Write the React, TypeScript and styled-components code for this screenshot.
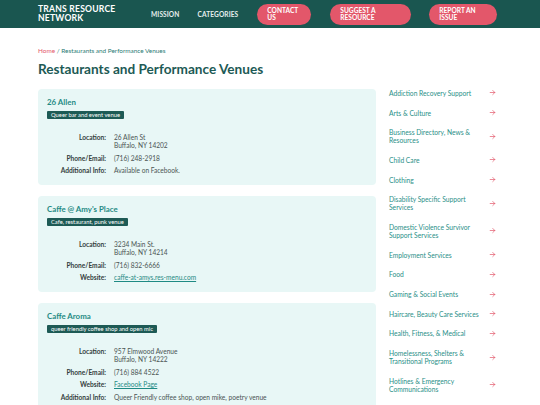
import React from "react";
import styled, { createGlobalStyle } from "styled-components";

const GlobalStyle = createGlobalStyle`
  html, body {
    margin: 0;
    padding: 0;
    background: #ffffff;
    font-family: Lato, "Open Sans", sans-serif;
  }
  * { box-sizing: border-box; }
`;

const Header = styled.header`
  height: 28px;
  background: #1a5650;
  display: flex;
  align-items: center;
  padding: 0 38px;
  & > * { flex-shrink: 0; }
`;

const Logo = styled.div`
  color: #ffffff;
  font-weight: 700;
  font-size: 8.6px;
  line-height: 9px;
  letter-spacing: 0.2px;
  width: 113px;
`;

const NavLink = styled.span<{ $gap: number }>`
  color: #e6efee;
  font-size: 6.6px;
  font-weight: 700;
  text-transform: uppercase;
  margin-right: ${({ $gap }) => $gap}px;
  letter-spacing: 0.1px;
`;

const PillButton = styled.span<{ $w: number; $gap: number }>`
  width: ${({ $w }) => $w}px;
  height: 21px;
  border-radius: 11px;
  background: #e3576a;
  color: #ffffff;
  font-size: 6.6px;
  font-weight: 700;
  line-height: 6.8px;
  text-transform: uppercase;
  display: flex;
  align-items: center;
  padding-left: 10px;
  margin-right: ${({ $gap }) => $gap}px;
`;

const Page = styled.div`
  padding: 0 38px;
`;

const Breadcrumb = styled.div`
  margin-top: 19px;
  font-size: 6.4px;
  line-height: 8px;
  color: #2a7b74;
  a { color: #e3576a; }
`;

const Title = styled.h1`
  margin: 5px 0 0 0;
  font-size: 13.6px;
  font-weight: 700;
  color: #1d5a55;
  line-height: 18px;
`;

const Layout = styled.div`
  display: grid;
  grid-template-columns: 338px 1fr;
  gap: 13px;
  margin-top: 11px;
`;

const CardList = styled.div`
  display: flex;
  flex-direction: column;
  gap: 11px;
`;

const Card = styled.div`
  background: #e8f7f6;
  border-radius: 4px;
  padding: 8px 9px 11px 9px;
`;

const CardName = styled.h2`
  margin: 0;
  font-size: 7.9px;
  font-weight: 700;
  color: #1f8a84;
  line-height: 10px;
`;

const Tag = styled.div`
  width: fit-content;
  margin-top: 4px;
  background: #1d5a55;
  color: #ffffff;
  font-size: 5.8px;
  line-height: 8px;
  height: 8px;
  padding: 0 4px;
  border-radius: 1px;
`;

const Details = styled.div`
  margin-top: 14px;
  display: grid;
  grid-template-columns: 59px 1fr;
  column-gap: 8px;
  row-gap: 4.5px;
  font-size: 6.6px;
  line-height: 8px;
`;

const Label = styled.div`
  text-align: right;
  font-weight: 700;
  color: #343e3d;
`;

const Value = styled.div`
  color: #4a5453;
  a { color: #1f8a84; text-decoration: underline; }
`;

const Sidebar = styled.nav`
  display: flex;
  flex-direction: column;
  margin-top: -6px;
`;

const SideItem = styled.a`
  display: flex;
  align-items: center;
  justify-content: space-between;
  width: 107px;
  padding: 5.85px 0;
  min-height: 19.7px;
  font-size: 6.7px;
  line-height: 8px;
  color: #2a8f88;
`;

const SideText = styled.span`
  max-width: 90px;
`;

const Arrow = () => (
  <svg width="7" height="7" viewBox="0 0 24 24" fill="none" stroke="#e3576a" strokeWidth="2.4" strokeLinecap="round" strokeLinejoin="round">
    <path d="M4 12h16" />
    <path d="M13 5l7 7-7 7" />
  </svg>
);

type Row = { label: string; lines?: string[]; link?: string };
type Venue = { name: string; tag: string; rows: Row[] };

const venues: Venue[] = [
  {
    name: "26 Allen",
    tag: "Queer bar and event venue",
    rows: [
      { label: "Location:", lines: ["26 Allen St", "Buffalo, NY 14202"] },
      { label: "Phone/Email:", lines: ["(716) 248-2918"] },
      { label: "Additional Info:", lines: ["Available on Facebook."] },
    ],
  },
  {
    name: "Caffe @ Amy's Place",
    tag: "Cafe, restaurant, punk venue",
    rows: [
      { label: "Location:", lines: ["3234 Main St.", "Buffalo, NY 14214"] },
      { label: "Phone/Email:", lines: ["(716) 832-6666"] },
      { label: "Website:", link: "caffe-at-amys.res-menu.com" },
    ],
  },
  {
    name: "Caffe Aroma",
    tag: "queer friendly coffee shop and open mic",
    rows: [
      { label: "Location:", lines: ["957 Elmwood Avenue", "Buffalo, NY 14222"] },
      { label: "Phone/Email:", lines: ["(716) 884 4522"] },
      { label: "Website:", link: "Facebook Page" },
      { label: "Additional Info:", lines: ["Queer Friendly coffee shop, open mike, poetry venue"] },
    ],
  },
];

const categories = [
  "Addiction Recovery Support",
  "Arts & Culture",
  "Business Directory, News & Resources",
  "Child Care",
  "Clothing",
  "Disability Specific Support Services",
  "Domestic Violence Survivor Support Services",
  "Employment Services",
  "Food",
  "Gaming & Social Events",
  "Haircare, Beauty Care Services",
  "Health, Fitness, & Medical",
  "Homelessness, Shelters & Transitional Programs",
  "Hotlines & Emergency Communications",
];

export default function App() {
  return (
    <>
      <GlobalStyle />
      <Header>
        <Logo>
          TRANS RESOURCE
          <br />
          NETWORK
        </Logo>
        <NavLink $gap={18}>Mission</NavLink>
        <NavLink $gap={19}>Categories</NavLink>
        <PillButton $w={54} $gap={19}>
          Contact
          <br />
          Us
        </PillButton>
        <PillButton $w={81} $gap={18}>
          Suggest a
          <br />
          Resource
        </PillButton>
        <PillButton $w={68} $gap={0}>
          Report an
          <br />
          Issue
        </PillButton>
      </Header>
      <Page>
        <Breadcrumb>
          <a>Home</a> / Restaurants and Performance Venues
        </Breadcrumb>
        <Title>Restaurants and Performance Venues</Title>
        <Layout>
          <CardList>
            {venues.map((v) => (
              <Card key={v.name}>
                <CardName>{v.name}</CardName>
                <Tag>{v.tag}</Tag>
                <Details>
                  {v.rows.map((r) => (
                    <React.Fragment key={r.label}>
                      <Label>{r.label}</Label>
                      <Value>
                        {r.link ? (
                          <a>{r.link}</a>
                        ) : (
                          r.lines?.map((l, i) => <div key={i}>{l}</div>)
                        )}
                      </Value>
                    </React.Fragment>
                  ))}
                </Details>
              </Card>
            ))}
          </CardList>
          <Sidebar>
            {categories.map((c) => (
              <SideItem key={c}>
                <SideText>{c}</SideText>
                <Arrow />
              </SideItem>
            ))}
          </Sidebar>
        </Layout>
      </Page>
    </>
  );
}
